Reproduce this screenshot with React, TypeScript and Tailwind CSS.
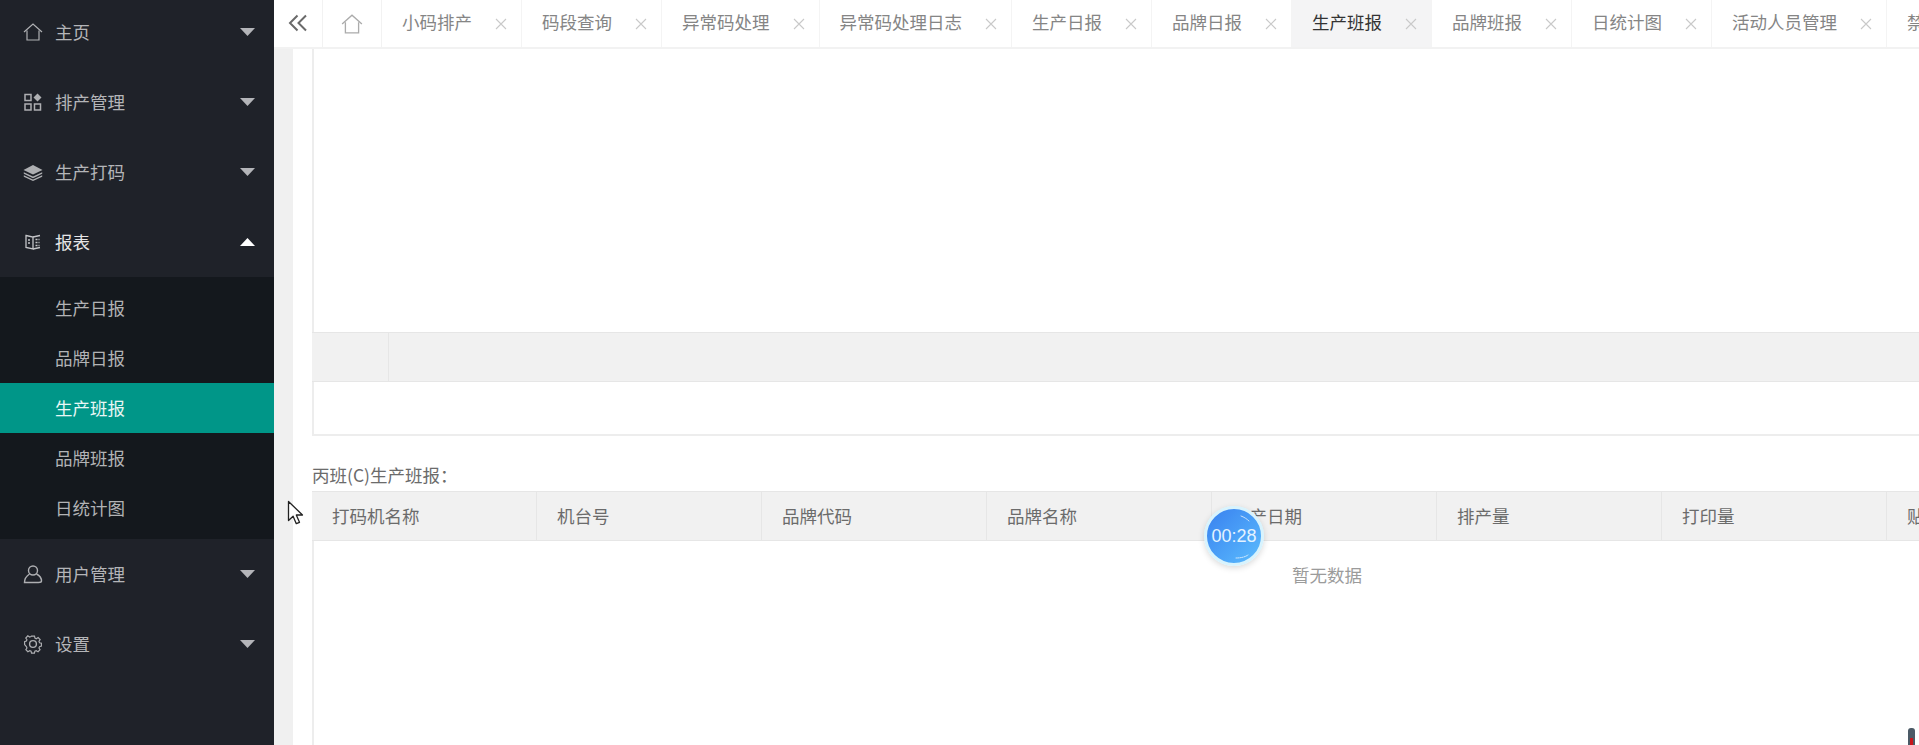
import React from "react";

const font = "font-['Noto_Sans_CJK_SC','Liberation_Sans',sans-serif]";

const Caret = ({ up }: { up?: boolean }) => (
  <svg width="15" height="8" viewBox="0 0 15 8" className="shrink-0">
    <path d={up ? "M7.5 0L15 8H0z" : "M0 0h15L7.5 8z"} fill={up ? "#fff" : "#b4b5b9"} />
  </svg>
);

const HomeIcon = ({ size = 20, color = "#b0b1b4" }: { size?: number; color?: string }) => (
  <svg width={size} height={size} viewBox="0 0 20 20" fill="none" stroke={color} strokeWidth="1.2">
    <path d="M1 10L10 2l9 8" />
    <path d="M4 8.5V18h12V8.5" />
  </svg>
);

const GridIcon = () => (
  <svg width="20" height="20" viewBox="0 0 20 20" fill="none" stroke="#aeafb2" strokeWidth="1.5">
    <rect x="2" y="2.5" width="6" height="6" />
    <path d="M14.5 1.5l4 4-4 4-4-4z" fill="#aeafb2" stroke="none" />
    <rect x="2" y="12" width="6" height="6" />
    <rect x="11.5" y="12" width="6" height="6" />
  </svg>
);

const LayersIcon = () => (
  <svg width="20" height="20" viewBox="0 0 20 20" fill="#aeafb2">
    <path d="M10 3l9.5 5L10 12.5.5 8z" />
    <path d="M.8 10.2L10 14.6l9.2-4.4v1.6L10 16.2.8 11.8z" />
    <path d="M.8 13.2L10 17.6l9.2-4.4v1.6L10 19 .8 14.8z" />
  </svg>
);

const ReportIcon = () => (
  <svg width="20" height="20" viewBox="0 0 20 20" fill="none" stroke="#c4c5c8" strokeWidth="1.3">
    <path d="M3 3.5l7 1.5v12l-7-1.5z" />
    <path d="M10 5l7-1.5M10 17l7-1.5" />
    <path d="M12.5 7.5h4M12.5 10.5h4M12.5 13.5h4M5 8h3M5 11h3" strokeDasharray="2 1" />
  </svg>
);

const UserIcon = () => (
  <svg width="20" height="20" viewBox="0 0 20 20" fill="none" stroke="#aeafb2" strokeWidth="1.4">
    <circle cx="10" cy="6.5" r="4.5" />
    <path d="M6.5 10C3.5 12 1.5 15 1.5 18.5h14c2 0 3-.5 3-1.5 0-2.5-2-5.5-5-7" />
  </svg>
);

const GearIcon = () => (
  <svg width="20" height="20" viewBox="0 0 20 20" fill="none" stroke="#aeafb2" strokeWidth="1.4">
    <path d="M8.2 1h3.6l.5 2.5 1.6.7 2.2-1.4 2.4 2.5-1.4 2.1.7 1.6 2.2.6v3.4l-2.2.6-.7 1.6 1.3 2.1-2.4 2.4-2.2-1.3-1.6.7-.5 2.3H8.2l-.5-2.3-1.6-.7-2.2 1.3-2.4-2.4 1.3-2.1-.7-1.6L0 11.1V7.6l2.1-.6.7-1.6-1.4-2.1 2.4-2.5 2.2 1.4 1.6-.7z" transform="translate(1.6 1.2) scale(.84)" />
    <circle cx="10" cy="10" r="3.4" />
  </svg>
);

const menuTop: [React.ReactNode, string][] = [
  [<HomeIcon />, "主页"],
  [<GridIcon />, "排产管理"],
  [<LayersIcon />, "生产打码"],
];

const MenuRow = ({ icon, label, open }: { icon: React.ReactNode; label: string; open?: boolean }) => (
  <div className={`flex h-[70px] items-center pl-[23px] pr-[19px] ${open ? "text-[#e6e6e7]" : "text-[#b4b5b8]"}`}>
    <span className="flex w-5 justify-center">{icon}</span>
    <span className="ml-[12px] flex-1">{label}</span>
    <Caret up={open} />
  </div>
);

const subItems = ["生产日报", "品牌日报", "生产班报", "品牌班报", "日统计图"];

const tabs = ["小码排产", "码段查询", "异常码处理", "异常码处理日志", "生产日报", "品牌日报", "生产班报", "品牌班报", "日统计图", "活动人员管理"];

const Tab = ({ label }: { label: string }) => {
  const active = label === "生产班报";
  return (
    <div className={`flex h-full shrink-0 items-center border-r border-[#f4f4f4] pl-[20px] pr-[14px] ${active ? "bg-[#f4f4f5] text-[#333333]" : "text-[#858585]"}`}>
      <span className="whitespace-nowrap pb-[2px]">{label}</span>
      <svg width="12" height="12" viewBox="0 0 12 12" className="ml-[23px]" stroke="#c9c9c9" strokeWidth="1.1">
        <path d="M1 1l10 10M11 1L1 11" />
      </svg>
    </div>
  );
};

const cols = ["打码机名称", "机台号", "品牌代码", "品牌名称", "生产日期", "排产量", "打印量", "贴标量"];

export default function App() {
  return (
    <div className={`relative flex h-[745px] w-[1919px] overflow-hidden bg-white text-[17.5px] ${font}`}>
      <aside className="flex w-[274px] shrink-0 flex-col bg-[#1f2229]">
        <div className="mt-[-3px]">
          {menuTop.map(([icon, label]) => (
            <MenuRow key={label} icon={icon} label={label} />
          ))}
        </div>
        <MenuRow icon={<ReportIcon />} label="报表" open />
        <div className="h-[262px] bg-[#14181d] pt-[6px]">
          {subItems.map((s) => (
            <div
              key={s}
              className={`flex h-[50px] items-center pl-[55px] ${s === "生产班报" ? "bg-[#009688] text-[#e8f7f5]" : "text-[#b2b3b5]"}`}
            >
              {s}
            </div>
          ))}
        </div>
        <MenuRow icon={<UserIcon />} label="用户管理" />
        <MenuRow icon={<GearIcon />} label="设置" />
      </aside>

      <main className="flex min-w-0 flex-1 flex-col">
        <nav className="flex h-[49px] shrink-0 overflow-hidden border-b-2 border-[#f2f2f2] bg-white">
          <div className="flex h-full w-[49px] shrink-0 items-center justify-center border-r border-[#f2f2f2] pb-[1px]">
            <svg width="20" height="18" viewBox="0 0 20 18" fill="none" stroke="#6a6a6a" strokeWidth="2">
              <path d="M9.5 1.5L2 9l7.5 7.5M18 1.5L10.5 9l7.5 7.5" />
            </svg>
          </div>
          <div className="flex h-full w-[59px] shrink-0 items-center justify-center border-r border-[#f2f2f2]">
            <HomeIcon size={22} color="#ababab" />
          </div>
          {tabs.map((t) => (
            <Tab key={t} label={t} />
          ))}
          <div className="flex h-full shrink-0 items-center pb-[2px] pl-[20px] text-[#858585]">禁用</div>
        </nav>

        <div className="flex min-h-0 flex-1">
          <div className="w-[19px] shrink-0 bg-[#f0f0f0]" />
          <div className="min-w-0 flex-1 overflow-hidden pl-[19px]">
            <div className="h-[387px] w-[1700px] border-b-2 border-[#ededed] shadow-[inset_2px_0_0_#ededed]">
              <div className="h-[283px]" />
              <div className="flex h-[50px] border-y border-[#e6e6e6] bg-[#f1f1f1]">
                <div className="w-[77px] border-r border-[#e6e6e6]" />
              </div>
            </div>
            <div className="flex h-[55px] items-end pb-[4px] leading-[24px] text-[#6b6b6b]">丙班(C)生产班报：</div>
            <div className="h-[260px] w-[1700px] shadow-[inset_2px_0_0_#ededed]">
              <div className="flex h-[50px] border-y border-[#e6e6e6] bg-[#f1f1f1]">
                {cols.map((c) => (
                  <div key={c} className="flex w-[225px] shrink-0 items-center border-r border-[#e6e6e6] pl-[20px] text-[#6b6b6b]">
                    {c}
                  </div>
                ))}
              </div>
              <div className="pl-[950px] pt-[21px] leading-[26px] text-[#9b9b9b]">
                <span className="inline-block w-[130px] text-center">暂无数据</span>
              </div>
            </div>
          </div>
        </div>
      </main>

      {/* Mouse pointer */}
      <svg width="18" height="26" viewBox="0 0 18 26" className="absolute left-[287px] top-[500px]">
        <path d="M1.5 1.5v19l4.6-4.3 3.2 7.5 3.2-1.4-3.2-7.3h6.2z" fill="#fff" stroke="#222" strokeWidth="1.3" strokeLinejoin="round" />
      </svg>

      {/* Recording timer */}
      <div className="absolute left-[1204px] top-[506px] flex h-[60px] w-[60px] items-center justify-center rounded-full border-[3px] border-[#d8f3fd] bg-gradient-to-br from-[#3a80ef] to-[#5cbcfd] text-[18px] leading-none text-[#e4f3ff] shadow-[0_2px_6px_rgba(0,0,0,0.15)] font-['Liberation_Sans',sans-serif]">
        00:28
        <svg width="54" height="54" viewBox="0 0 54 54" fill="none" stroke="#ffffff" strokeLinecap="round" className="absolute left-0 top-0 opacity-70">
          <path d="M34 7c3 1 6 3 8 5" strokeWidth="1" />
          <path d="M29 49c5 0 9-1 12-3" strokeWidth="1" strokeDasharray="3 1" />
        </svg>
      </div>

      {/* Tray marker at the bottom right */}
      <div className="absolute left-[1908px] top-[728px] h-[20px] w-[7px] rounded-t-[3px] bg-[#4b5a66]">
        <div className="mx-auto mt-[10px] h-[10px] w-[3px] bg-[#c8151b]" />
      </div>
    </div>
  );
}
